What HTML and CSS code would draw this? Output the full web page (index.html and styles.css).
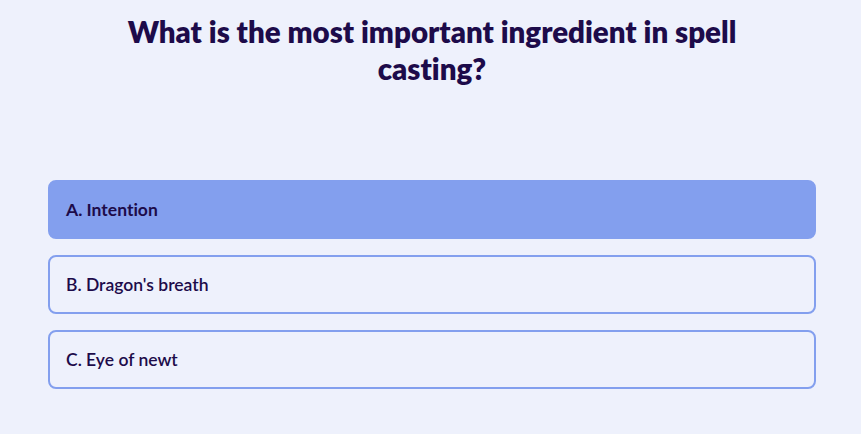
FILE: index.html
```html
<!DOCTYPE html>
<html>
<head>
<meta charset="utf-8">
<link rel="stylesheet" href="styles.css">
</head>
<body>
<main class="quiz">
  <h1 class="question">What is the most important ingredient in spell casting?</h1>
  <div class="options">
    <button class="option selected">A. Intention</button>
    <button class="option">B. Dragon's breath</button>
    <button class="option">C. Eye of newt</button>
  </div>
</main>
</body>
</html>
```
FILE: styles.css
```css
html, body {
  margin: 0;
  padding: 0;
  background: #eef1fc;
}
body {
  font-family: Lato, "Noto Sans", sans-serif;
  font-variant-ligatures: none;
  color: #1d0b4a;
}
.quiz {
  width: 768px;
  margin: 0 0 0 48px;
  padding-top: 13px;
}
.question {
  margin: 0 auto;
  max-width: 660px;
  text-align: center;
  font-size: 29.5px;
  line-height: 37px;
  font-weight: 800;
  color: #1d0b4a;
}
.options {
  margin-top: 93px;
  display: flex;
  flex-direction: column;
  gap: 16px;
}
.option {
  display: block;
  width: 100%;
  height: 59px;
  box-sizing: border-box;
  text-align: left;
  padding: 0 16px;
  border: 2px solid #839fee;
  border-radius: 8px;
  background: transparent;
  font-family: inherit;
  font-variant-ligatures: none;
  font-size: 17.5px;
  font-weight: 600;
  color: #1d0b4a;
}
.option.selected {
  background: #839fee;
  font-weight: 700;
}
```
